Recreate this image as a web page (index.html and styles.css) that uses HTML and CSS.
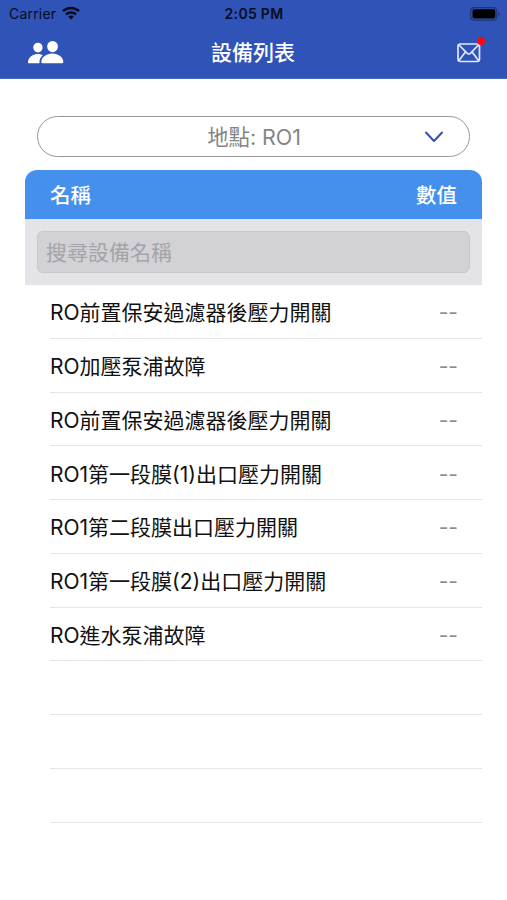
FILE: index.html
```html
<!DOCTYPE html>
<html lang="zh-Hant">
<head>
    <meta charset="UTF-8">
    <meta name="viewport" content="width=device-width, initial-scale=1.0">
    <title>設備列表</title>
    <link rel="stylesheet" href="styles.css">
</head>
<body>
    <header class="top">
        <div class="status-bar">
            <div class="carrier">
                <span>Carrier</span>
                <svg class="wifi" width="18" height="14" viewBox="0 0 18 14">
                    <g fill="none" stroke="#060d20" stroke-width="2.5">
                        <path d="M1 5.2a11.4 11.4 0 0 1 16 0"/>
                        <path d="M4 8.5a7.2 7.2 0 0 1 10 0"/>
                    </g>
                    <path d="M9 13.6 6.2 10.7a4.1 4.1 0 0 1 5.6 0z" fill="#060d20"/>
                </svg>
            </div>
            <span class="time">2:05 PM</span>
            <svg class="battery" width="31" height="14" viewBox="0 0 31 14">
                <rect x=".7" y=".7" width="26" height="12.4" rx="3.4" fill="none" stroke="#1d3478" stroke-width="1.2"/>
                <rect x="2.5" y="2.2" width="22.8" height="9.4" rx="1.8" fill="#000"/>
                <path d="M28.3 4.8v4.4c1.9-.8 1.9-3.6 0-4.4z" fill="#1d3478"/>
            </svg>
        </div>
        <nav class="nav-bar">
            <svg class="people" width="36" height="25" viewBox="0 0 37 25" fill="#fff">
                <ellipse cx="10.2" cy="7.4" rx="4.8" ry="5"/>
                <path d="M.7 23.5c-.6 0-.7-.5-.7-1 0-4.5 4.300-8.500 10-8.500 2 0 3.800.5 5.200 1.400-2.200 1.800-3.700 4.300-3.400 8.100z"/>
                <ellipse cx="25.2" cy="6.400" rx="5.500" ry="5.800"/>
                <path d="M14.800 23.500c-.8 0-1.100-.5-1.100-1.200 0-5 5.100-8.800 11.300-8.800s11.300 3.800 11.300 8.800c0 .7-.3 1.200-1.100 1.200z"/>
            </svg>
            <h1>設備列表</h1>
            <div class="mail">
                <svg width="24" height="20" viewBox="0 0 24 20" fill="none" stroke="#e1e9ff" stroke-width="1.7" stroke-linejoin="round">
                    <rect x="1" y="1" width="21.500" height="17.500" rx="2.400"/>
                    <path d="M2 2 10 10.200c1.200 1.100 2.400 1.100 3.600 0L21.500 2M2 17.500l6.200-8.200M21.500 17.500l-6.200-8.200"/>
                </svg>
                <span class="badge"></span>
            </div>
        </nav>
    </header>

    <main>
        <button class="location">
            <span>地點: RO1</span>
            <svg class="chevron" width="20" height="12" viewBox="0 0 20 12" fill="none" stroke="#3351b5" stroke-width="2" stroke-linecap="round" stroke-linejoin="round">
                <path d="M2 1.500 10 10l8-8.500"/>
            </svg>
        </button>

        <div class="table-head">
            <span>名稱</span>
            <span>數值</span>
        </div>
        <div class="search">
            <input class="search-input" type="text" placeholder="搜尋設備名稱">
        </div>
        <ul class="device-list">
            <li><span>RO前置保安過濾器後壓力開關</span><span class="value">--</span></li>
            <li><span>RO加壓泵浦故障</span><span class="value">--</span></li>
            <li><span>RO前置保安過濾器後壓力開關</span><span class="value">--</span></li>
            <li><span>RO1第一段膜(1)出口壓力開關</span><span class="value">--</span></li>
            <li><span>RO1第二段膜出口壓力開關</span><span class="value">--</span></li>
            <li><span>RO1第一段膜(2)出口壓力開關</span><span class="value">--</span></li>
            <li><span>RO進水泵浦故障</span><span class="value">--</span></li>
            <li></li>
            <li></li>
            <li></li>
        </ul>
    </main>
</body>
</html>
```
FILE: styles.css
```css
* {
    margin: 0;
    padding: 0;
    box-sizing: border-box;
}

body {
    min-height: 100vh;
    background: #fff;
    font-family: Inter, "Noto Sans CJK TC", sans-serif;
    overflow: hidden;
}

.top {
    height: 79px;
    background: #3053b7;
    border-bottom: 1px solid #4a69c1;
}

.status-bar {
    height: 27px;
    padding: 0 8px 0 9px;
    display: grid;
    grid-template-columns: 1fr auto 1fr;
    align-items: center;
    color: #060d20;
    font-size: 14px;
}

.carrier {
    display: flex;
    align-items: center;
    gap: 6px;
    letter-spacing: 0.2px;
}

.wifi {
    margin-bottom: 2px;
}

.time {
    font-weight: 600;
    letter-spacing: 0.3px;
}

.battery {
    justify-self: end;
    margin-right: -2px;
}

.nav-bar {
    height: 51px;
    padding: 0 26px 0 28px;
    display: grid;
    grid-template-columns: 1fr auto 1fr;
    align-items: center;
}

.nav-bar h1 {
    margin-right: 3px;
    color: #fff;
    font-size: 21px;
    font-weight: 500;
    line-height: 30px;
}

.mail {
    position: relative;
    justify-self: end;
    height: 20px;
}

.mail svg {
    display: block;
}

.badge {
    position: absolute;
    top: -6px;
    right: -4px;
    width: 8px;
    height: 8px;
    border-radius: 50%;
    background: #fb0710;
}

main {
    padding: 37px 25px 0;
}

.location {
    display: grid;
    grid-template-columns: 1fr auto 1fr;
    align-items: center;
    width: 433px;
    height: 41px;
    margin: 0 12px 13px;
    padding: 0 25px 2px 26px;
    border: 1.5px solid #979797;
    border-radius: 21px;
    background: #fff;
    color: #858585;
    font-family: inherit;
    font-size: 21.5px;
    font-weight: 400;
    letter-spacing: -0.1px;
}

.location span {
    grid-column: 2;
}

.chevron {
    justify-self: end;
    margin-top: 2px;
}

.table-head {
    display: flex;
    justify-content: space-between;
    align-items: center;
    height: 49px;
    padding: 0 25px 2px;
    border-radius: 12px 12px 0 0;
    background: #4590ed;
    color: #fff;
    font-size: 20.5px;
    font-weight: 500;
}

.search {
    height: 66px;
    padding: 12px;
    background: #e4e4e8;
}

.search-input {
    display: block;
    width: 100%;
    height: 42px;
    padding: 0 8px;
    border: 1px solid #c8c8cc;
    border-radius: 6px;
    background: #d1d1d6;
    font-family: inherit;
    font-size: 21px;
}

.search-input::placeholder {
    color: #a4a4a8;
}

.device-list {
    margin-left: 25px;
    list-style: none;
}

.device-list li {
    display: flex;
    justify-content: space-between;
    align-items: center;
    height: 53.75px;
    padding-right: 24px;
    border-bottom: 1px solid #e5e5e6;
    color: #111;
    font-size: 21px;
}

.device-list .value {
    padding-top: 3px;
    color: #8c8c8c;
}
```
